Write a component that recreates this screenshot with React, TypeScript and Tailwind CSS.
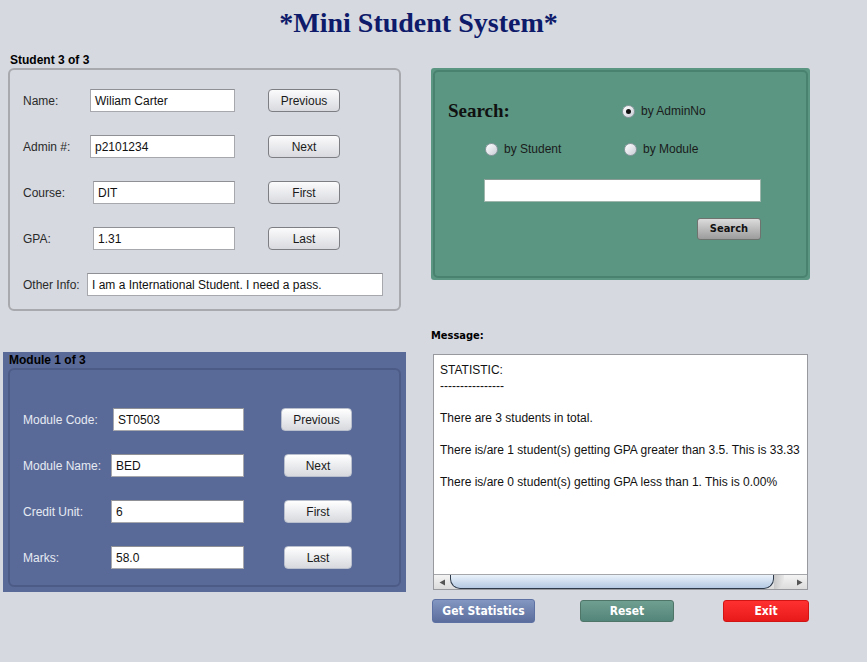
import React from "react";

const sans = "font-['Liberation_Sans',Arial,sans-serif]";
const tahoma = "font-['DejaVu_Sans_Condensed','DejaVu_Sans',sans-serif]";

function Field({ value, width }: { value: string; width: number }) {
  return (
    <div
      className={`flex h-[23px] items-center border border-[#a6a8ad] border-t-[#8e9095] bg-white pl-[4px] text-[12px] text-[#111] ${sans}`}
      style={{ width }}
    >
      {value}
    </div>
  );
}

function NavButton({ label, width, light }: { label: string; width: number; light?: boolean }) {
  return (
    <button
      className={`flex h-[23px] items-center justify-center rounded-[4px] border bg-gradient-to-b text-[12px] text-[#1a1a1a] ${sans} ${
        light
          ? "border-[#b9bfcc] from-white to-[#d7d9de]"
          : "border-[#7c7e83] from-[#fbfbfc] to-[#d9dadf]"
      }`}
      style={{ width }}
    >
      {label}
    </button>
  );
}

type Row = { label: string; value: string; inputX: number; inputW: number; btn: string; btnX: number; btnW: number };

const studentRows: Row[] = [
  { label: "Name:", value: "Wiliam Carter", inputX: 90, inputW: 145, btn: "Previous", btnX: 268, btnW: 72 },
  { label: "Admin #:", value: "p2101234", inputX: 90, inputW: 145, btn: "Next", btnX: 268, btnW: 72 },
  { label: "Course:", value: "DIT", inputX: 93, inputW: 142, btn: "First", btnX: 268, btnW: 72 },
  { label: "GPA:", value: "1.31", inputX: 93, inputW: 142, btn: "Last", btnX: 268, btnW: 72 },
];

const moduleRows: Row[] = [
  { label: "Module Code:", value: "ST0503", inputX: 113, inputW: 131, btn: "Previous", btnX: 281, btnW: 71 },
  { label: "Module Name:", value: "BED", inputX: 111, inputW: 133, btn: "Next", btnX: 284, btnW: 68 },
  { label: "Credit Unit:", value: "6", inputX: 111, inputW: 133, btn: "First", btnX: 284, btnW: 68 },
  { label: "Marks:", value: "58.0", inputX: 111, inputW: 133, btn: "Last", btnX: 284, btnW: 68 },
];

function FormRow({ row, labelLeft, labelColor, light }: { row: Row; labelLeft: number; labelColor: string; light?: boolean }) {
  const labelW = row.inputX - labelLeft;
  const gap = row.btnX - (row.inputX + row.inputW);
  return (
    <div className="flex h-[23px] items-center">
      <span className={`text-[12px] ${labelColor} ${sans}`} style={{ width: labelW }}>
        {row.label}
      </span>
      <Field value={row.value} width={row.inputW} />
      <div style={{ width: gap }} />
      <NavButton label={row.btn} width={row.btnW} light={light} />
    </div>
  );
}

function Radio({ label, checked }: { label: string; checked?: boolean }) {
  return (
    <div className={`flex items-center gap-[6px] text-[12px] text-[#1b1b1b] ${sans}`}>
      <span className="flex h-[13px] w-[13px] items-center justify-center rounded-full border border-[#8d9aa0] bg-gradient-to-br from-white to-[#c9ced6]">
        {checked && <span className="h-[5px] w-[5px] rounded-full bg-[#111]" />}
      </span>
      {label}
    </div>
  );
}

export default function App() {
  return (
    <div className="h-[662px] w-[867px] overflow-hidden bg-[#d6d9e0]">
      {/* Title */}
      <div className="flex h-[46px] items-center justify-center pr-[30px]">
        <h1 className="font-['Liberation_Serif','Times_New_Roman',serif] text-[28px] font-bold text-[#0e1a6a]">
          *Mini Student System*
        </h1>
      </div>

      <div className="flex">
        {/* Left column */}
        <div className="flex w-[410px] flex-col">
          <div className={`ml-[10px] h-[22px] pt-[7px] text-[12px] leading-[14px] font-bold text-black ${sans}`}>
            Student 3 of 3
          </div>
          <div className="ml-[8px] flex h-[243px] w-[393px] flex-col gap-[23px] rounded-[6px] border-2 border-[#a7a9ae] pl-[13px] pt-[19px]">
            {studentRows.map((r) => (
              <FormRow key={r.label} row={r} labelLeft={23} labelColor="text-[#2a2a2a]" />
            ))}
            <div className="flex h-[23px] items-center">
              <span className={`w-[64px] text-[12px] text-[#2a2a2a] ${sans}`}>Other Info:</span>
              <Field value="I am a International Student. I need a pass." width={296} />
            </div>
          </div>

          <div className="ml-[3px] mt-[41px] flex h-[240px] w-[403px] flex-col bg-[#5a6a98] px-[5px] pb-[5px]">
            <div className={`h-[16px] pl-[1px] pt-[1px] text-[12px] leading-[14px] font-bold text-black ${sans}`}>
              Module 1 of 3
            </div>
            <div className="flex flex-1 flex-col gap-[23px] rounded-[6px] border-2 border-[#4c5b86] pl-[13px] pt-[38px]">
              {moduleRows.map((r) => (
                <FormRow key={r.label} row={r} labelLeft={23} labelColor="text-[#e6eaf3]" light />
              ))}
            </div>
          </div>
        </div>

        {/* Right column */}
        <div className="ml-[21px] flex w-[380px] flex-col">
          <div className="mt-[22px] flex h-[212px] w-[379px] flex-col rounded-[3px] bg-[#5a9682] p-[2px]">
            <div className="relative flex-1 rounded-[5px] border-2 border-[#4a8270]">
              <div className="flex items-center pl-[13px] pt-[28px]">
                <span className="w-[174px] font-['Liberation_Serif','Times_New_Roman',serif] text-[19px] font-bold leading-[22px] text-[#111]">
                  Search:
                </span>
                <Radio label="by AdminNo" checked />
              </div>
              <div className="mt-[18px] flex items-center pl-[50px]">
                <div className="w-[139px]">
                  <Radio label="by Student" />
                </div>
                <Radio label="by Module" />
              </div>
              <div className="ml-[49px] mt-[21px] h-[23px] w-[277px] border border-[#9fb6ad] border-t-[#8a9a94] bg-white" />
              <div className="mt-[16px] flex pl-[262px]">
                <button
                  className={`flex h-[22px] w-[64px] items-center justify-center rounded-[3px] border border-[#6f7370] bg-gradient-to-b from-[#dcdcdc] to-[#9c9c9c] text-[11px] font-bold text-[#111] ${tahoma}`}
                >
                  Search
                </button>
              </div>
            </div>
          </div>

          <div className={`mt-[48px] h-[26px] text-[11px] font-bold text-black ${tahoma}`}>Message:</div>

          <div className="ml-[2px] flex h-[236px] w-[375px] flex-col border border-[#98999e] bg-white">
            <div className={`flex-1 overflow-hidden whitespace-nowrap pl-[6px] pt-[7px] text-[12px] leading-[16px] text-[#111] ${sans}`}>
              <div>STATISTIC:</div>
              <div>----------------</div>
              <div>&nbsp;</div>
              <div>There are 3 students in total.</div>
              <div>&nbsp;</div>
              <div>There is/are 1 student(s) getting GPA greater than 3.5. This is 33.33</div>
              <div>&nbsp;</div>
              <div>There is/are 0 student(s) getting GPA less than 1. This is 0.00%</div>
            </div>
            {/* horizontal scrollbar */}
            <div className="flex h-[15px] items-stretch border-t border-[#a5a7ab] bg-gradient-to-b from-[#f4f4f4] to-[#dcdcdc]">
              <div className="flex w-[16px] items-center justify-center">
                <svg width="7" height="7" viewBox="0 0 7 7">
                  <path d="M6 0.5 L0.5 3.5 L6 6.5 Z" fill="#555" />
                </svg>
              </div>
              <div className="w-[324px] rounded-b-[10px] border-x border-b border-[#2e3a4a] bg-gradient-to-b from-[#eaf2fb] to-[#b4c9e2]" />
              <div className="w-[10px] rounded-br-[8px] bg-gradient-to-r from-[#c8c8c8] to-[#e8e8e8]" />
              <div className="flex-1" />
              <div className="flex w-[16px] items-center justify-center">
                <svg width="7" height="7" viewBox="0 0 7 7">
                  <path d="M1 0.5 L6.5 3.5 L1 6.5 Z" fill="#555" />
                </svg>
              </div>
            </div>
          </div>

          <div className={`mt-[9px] flex items-center text-[12px] font-bold text-white ${tahoma}`}>
            <button className="ml-[1px] flex h-[24px] w-[103px] items-center justify-center rounded-[3px] border border-[#5d72a3] bg-gradient-to-b from-[#8397c2] to-[#5b6d9c]">
              Get Statistics
            </button>
            <button className="ml-[45px] flex h-[22px] w-[94px] items-center justify-center rounded-[3px] border border-[#4e7568] bg-gradient-to-b from-[#6f9f90] to-[#54857a]">
              Reset
            </button>
            <button className="ml-[49px] flex h-[22px] w-[86px] items-center justify-center rounded-[3px] border border-[#d11414] bg-gradient-to-b from-[#ff3030] to-[#e81919]">
              Exit
            </button>
          </div>
        </div>
      </div>
    </div>
  );
}
